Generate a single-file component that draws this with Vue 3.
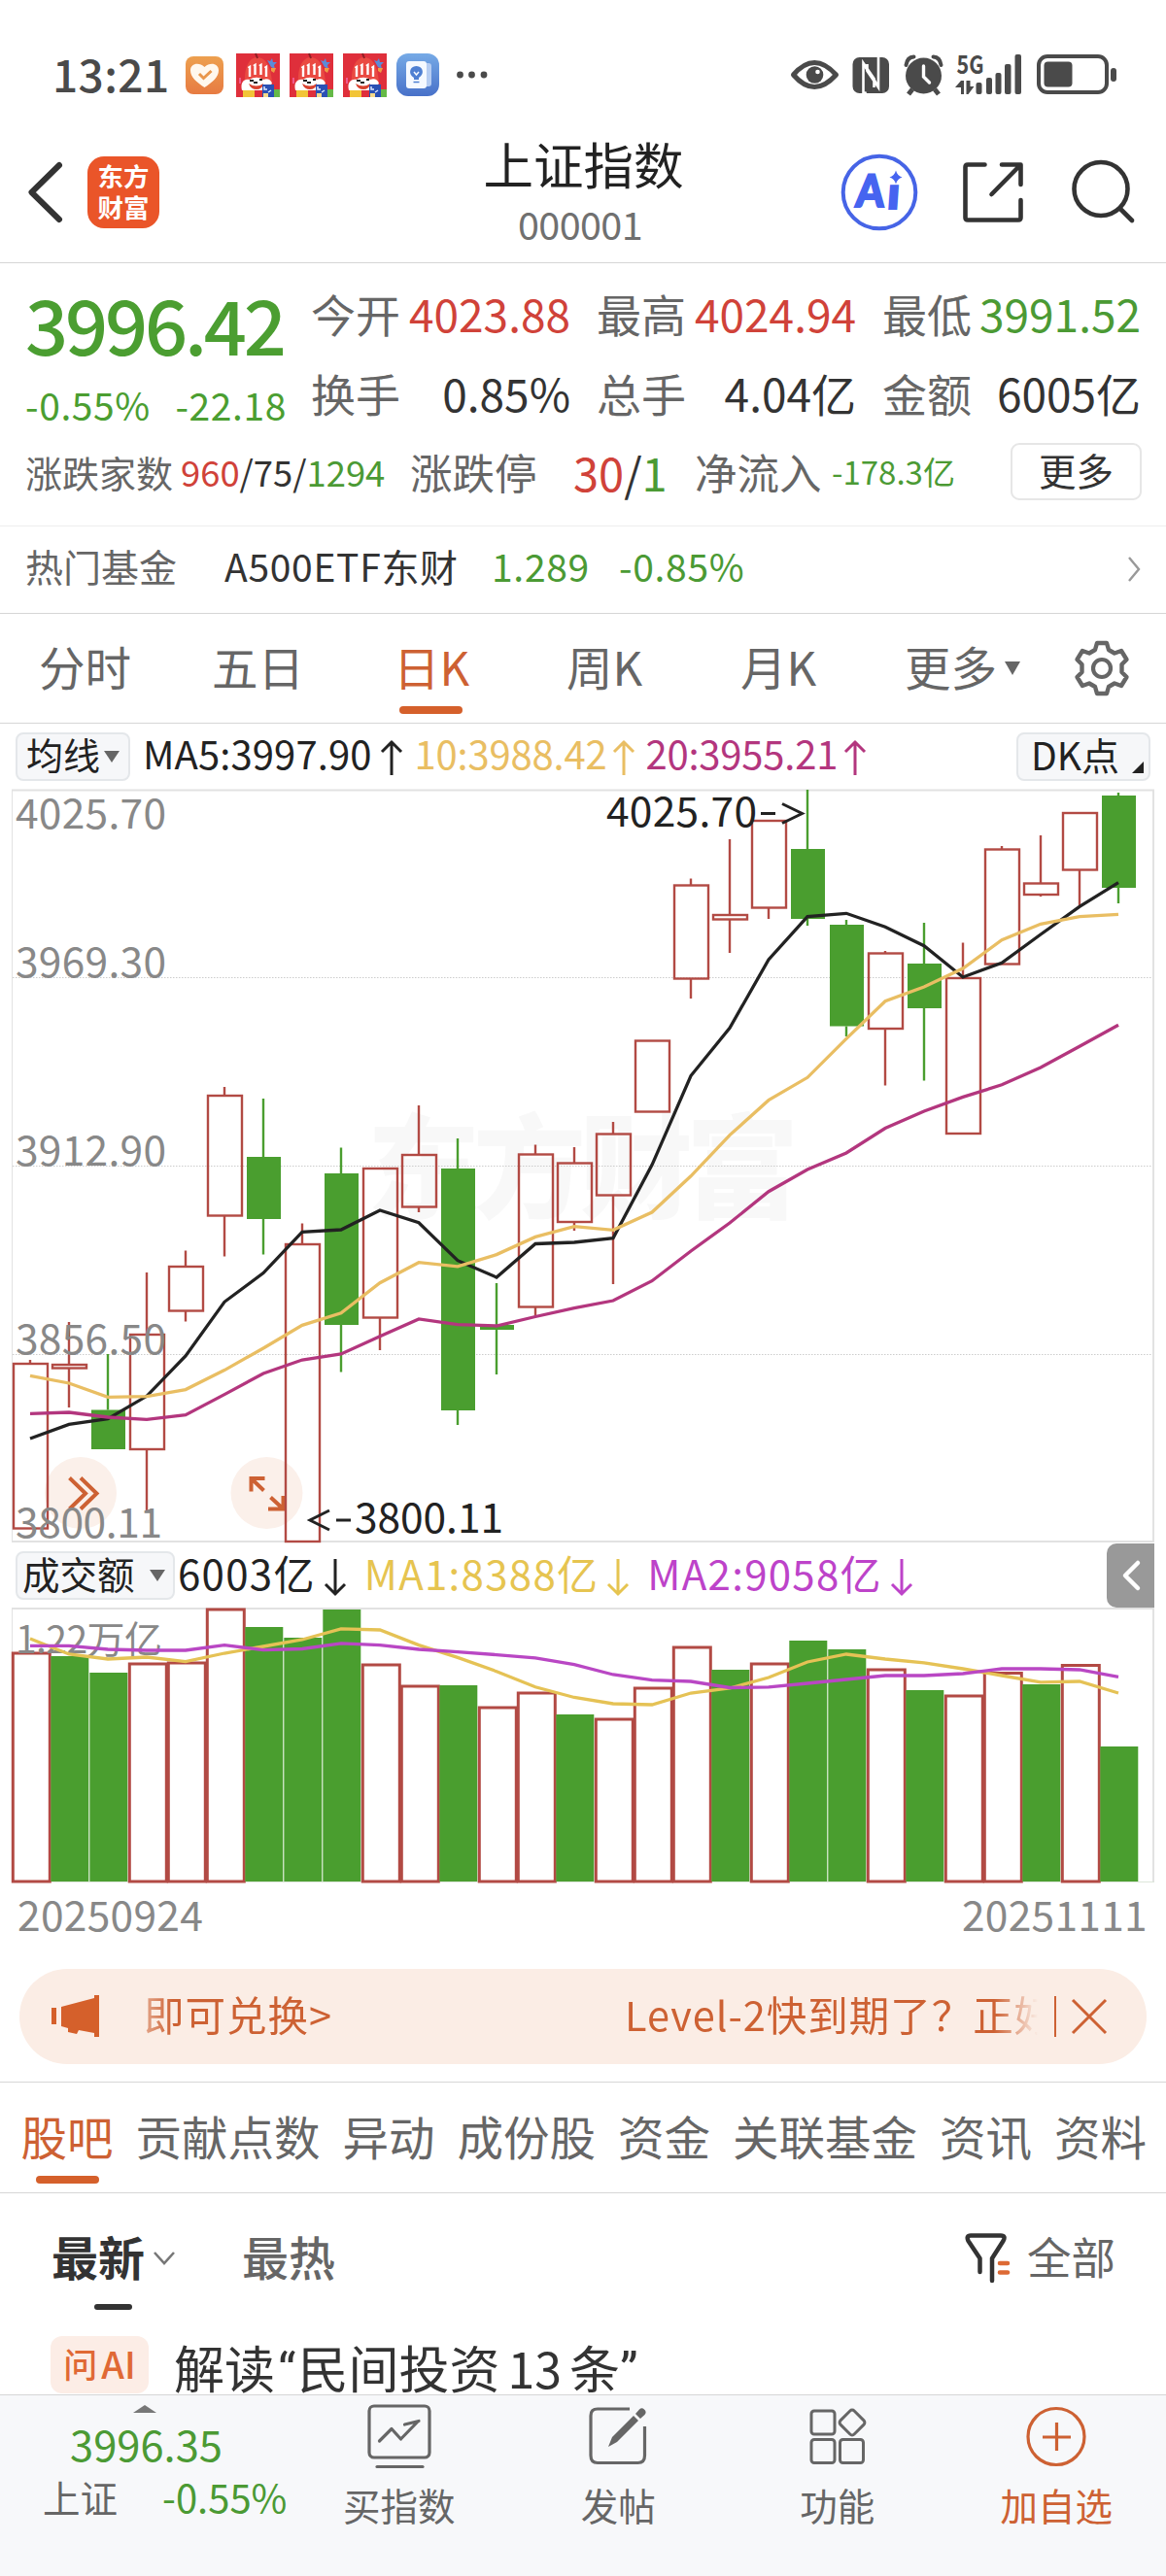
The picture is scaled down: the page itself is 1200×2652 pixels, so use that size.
<template>
  <div class="page">
    <div class="status-bar">
      <span class="clock">13:21</span>
      <svg class="status-apps" width="320" height="46" viewBox="0 0 320 46">
        <defs>
          <linearGradient id="orange" x1="0" y1="0" x2="0" y2="1">
            <stop offset="0" stop-color="#eda04f" />
            <stop offset="1" stop-color="#e77b42" />
          </linearGradient>
          <linearGradient id="blue" x1="0" y1="0" x2="0" y2="1">
            <stop offset="0" stop-color="#76aae6" />
            <stop offset="1" stop-color="#4871c9" />
          </linearGradient>
        </defs>
        <rect x="1" y="4" width="39" height="39" rx="8" fill="url(#orange)" />
        <path
          d="M20.500 36C12 30.500 6 25 6 18.500C6 11.500 14.500 9.500 20.500 15C26.500 9.500 35 11.500 35 18.500C35 25 29 30.500 20.500 36Z"
          fill="#fff8ee"
        />
        <path d="M15 22l4.500 4.500l8-7.500" fill="none" stroke="#e9974c" stroke-width="3" />
        <g v-for="n in 3" :key="n" :transform="`translate(${53 + (n - 1) * 55} 1)`">
          <rect width="45" height="45" fill="#df2f3b" />
          <path d="M32 7l3 1l2-3l1 4l4 0l-3 3l1 4l-4-2z" fill="#5b8bd8" />
          <path d="M36 15l5 0l-2 5l-3-2z" fill="#ef9b45" />
          <path d="M9 31C8 17 12 5 21 4C31 4 36 14 37 31Z" fill="#ea4a42" />
          <path d="M20 0l2 5" stroke="#8e1f24" stroke-width="2" />
          <path
            d="M14 24V14l-1.500 1M19.500 22V12l-1.500 1M25.500 22V12l-1.500 1M31 24V14l-1.500 1"
            stroke="#fff"
            stroke-width="2.400"
            fill="none"
          />
          <path d="M4 25v6" stroke="#ee5a8d" stroke-width="2" />
          <path d="M6 38c-2-8 2-12 8-11c4-3 10-3 14 0c4-2 8 0 9 4l-8 7z" fill="#fff" />
          <path d="M13 31q8 5 15 0q-1 6-7 6t-8-6z" fill="#d9422f" />
          <path d="M14 28h4M18 30h4M24 27h3" stroke="#222" stroke-width="2" />
          <path d="M19 41l10-2" stroke="#df2f3b" stroke-width="2" />
          <rect x="7" y="38" width="12" height="7" fill="#f2c437" />
          <rect x="27" y="32" width="12" height="13" fill="#2a50b4" />
          <path d="M29 34v3h3M36 38l-3 2" stroke="#dfe8ff" stroke-width="1.500" fill="none" />
          <rect x="28" y="41" width="5" height="4" fill="#f5d98a" />
          <path d="M39 37h6v8h-6z" fill="#65b947" />
        </g>
        <rect x="218" y="1" width="44" height="44" rx="12" fill="url(#blue)" />
        <rect x="240" y="11" width="14" height="24" rx="3" fill="#b6cdf2" />
        <rect x="228" y="9" width="21" height="28" rx="3" fill="#f5f9ff" />
        <path d="M236 26c-6-3-5-12 2.500-12s8.500 9 2.500 12v2h-5z" fill="#4f80d2" />
        <path d="M235.500 30.500h6" stroke="#4f80d2" stroke-width="1.500" fill="none" />
        <path d="M236 20l2.500 3l2.500-3" stroke="#f5f9ff" stroke-width="1.500" fill="none" />
        <circle v-for="x in [283.5, 295.5, 308]" :key="x" :cx="x" cy="23" r="3.400" fill="#4a4a4a" />
      </svg>

      <svg class="status-sys" width="340" height="46" viewBox="812 54 340 46" fill="#4a4a4a">
        <path
          d="M816.500 77Q838 52 860.500 77Q838 102 816.500 77Z"
          fill="none"
          stroke="#4a4a4a"
          stroke-width="5"
          stroke-linejoin="round"
        />
        <circle cx="838.500" cy="77" r="8.800" />
        <circle cx="841.500" cy="74" r="2.300" fill="#fff" />
        <rect x="877.500" y="59" width="37.500" height="37" rx="7" />
        <path
          d="M888.500 97V65l11 16V90M891 97l-1-2.500M904 58v32l-11.500-17V66"
          fill="none"
          stroke="#fff"
          stroke-width="2.600"
        />
        <path d="M888.500 66l15 22" stroke="#fff" stroke-width="2.600" />
        <circle cx="950.500" cy="78" r="18.500" />
        <path
          d="M932.500 67q1-8 8-8.500M968.500 67q-1-8-8-8.500"
          stroke="#4a4a4a"
          stroke-width="4"
          fill="none"
          stroke-linecap="round"
        />
        <path d="M939 92l-4 5M962 92l4 5" stroke="#4a4a4a" stroke-width="5" />
        <path d="M950.500 68v11l6 6" stroke="#fff" stroke-width="3.400" fill="none" stroke-linecap="round" />
        <text class="net" x="984.500" y="76" textLength="28" lengthAdjust="spacingAndGlyphs">5G</text>
        <path d="M983 90l6-7h3v14h-3v-7zM996 83h2.500v6h4l-6 8h-2V83z" />
        <rect x="1004.500" y="85" width="6" height="12" rx="2" />
        <rect x="1015" y="80" width="6" height="17" rx="2" />
        <rect x="1024.500" y="75" width="6" height="22" rx="2" />
        <rect x="1034" y="66" width="6.500" height="31" rx="2" />
        <rect x="1044.500" y="56" width="6.500" height="41" rx="2" />
        <rect
          x="1069"
          y="58"
          width="70"
          height="37"
          rx="9"
          fill="none"
          stroke="#4a4a4a"
          stroke-width="4"
        />
        <rect x="1074.500" y="63.500" width="29" height="26" rx="4" />
        <rect x="1143" y="70" width="6" height="14" rx="3" />
      </svg>
    </div>

    <header class="nav">
      <div class="nav-left">
        <svg width="40" height="64" viewBox="0 0 40 64">
          <path
            d="M35 4L6.500 32L35 60"
            fill="none"
            stroke="#333"
            stroke-width="6"
            stroke-linecap="round"
            stroke-linejoin="round"
          />
        </svg>
        <div class="logo"><span>东方</span><span>财富</span></div>
      </div>
      <div class="nav-title">
        <h1>上证指数</h1>
        <p>000001</p>
      </div>
      <svg class="nav-tools" width="310" height="84" viewBox="862 156 310 84" fill="none">
        <circle cx="905" cy="198" r="37.300" stroke="#4664e6" stroke-width="4" />
        <g transform="translate(0 213) skewX(-4)">
          <text class="ai" x="880" y="0" textLength="29" lengthAdjust="spacingAndGlyphs">A</text>
          <text class="ai" x="912.500" y="2" textLength="13" lengthAdjust="spacingAndGlyphs">ı</text>
        </g>
        <path d="M922 175.500q1.500 5.500 6.500 7q-5 1.500-6.500 7q-1.500-5.500-6.500-7q5-1.500 6.500-7z" fill="#4664f0" />
        <g stroke="#333" stroke-width="4.600" stroke-linecap="round" stroke-linejoin="round">
          <path d="M1013.500 169.500H996q-2.500 0-2.500 2.500V224q0 2.500 2.500 2.500H1048q2.500 0 2.500-2.500V206" />
          <path d="M1031 169.500H1050.500V190M1020.500 200L1050 170" />
          <circle cx="1133" cy="194.500" r="27.500" />
          <path d="M1153 215L1165 227" />
        </g>
      </svg>
    </header>

    <section class="quote">
      <div class="quote-top">
        <div class="price">
          <strong>3996.42</strong>
          <p><span>-0.55%</span><span>-22.18</span></p>
        </div>
        <div class="stats">
          <div v-for="s in stats" :key="s.label" class="stat">
            <label>{{ s.label }}</label>
            <span :class="s.color">{{ s.value }}</span>
          </div>
        </div>
      </div>
      <div class="quote-bottom">
        <label class="small">涨跌家数</label>
        <span class="counts"><i class="up">960</i>/75/<i class="down">1294</i></span>
        <label>涨跌停</label>
        <span class="limits"><i class="up">30</i>/<i class="down">1</i></span>
        <label>净流入</label>
        <span class="inflow down">-178.3亿</span>
        <button>更多</button>
      </div>
    </section>

    <section class="fund">
      <label>热门基金</label>
      <span class="fund-name">A500ETF东财</span>
      <span class="down">1.289</span>
      <span class="down">-0.85%</span>
      <svg width="16" height="28" viewBox="0 0 16 28">
        <path d="M3 2L13 14L3 26" fill="none" stroke="#999" stroke-width="2.400" />
      </svg>
    </section>

    <nav class="periods">
      <span v-for="p in periods" :key="p" :class="{ active: p === '日K' }">{{ p }}</span>
      <svg class="caret" width="16" height="14" viewBox="0 0 16 14">
        <path d="M0 0H16L8 14Z" fill="#666" />
      </svg>
      <svg class="gear" width="56" height="60" viewBox="-28 -30 56 60">
        <path
          d="M-5 -26H5L7 -19L13 -15.500L20 -18L25.500 -9L20.500 -4V4L25.500 9L20 18L13 15.500L7 19L5 26H-5L-7 19L-13 15.500L-20 18L-25.500 9L-20.500 4V-4L-25.500 -9L-20 -18L-13 -15.500L-7 -19Z"
          fill="none"
          stroke="#666"
          stroke-width="4.400"
          stroke-linejoin="round"
        />
        <circle r="9" fill="none" stroke="#666" stroke-width="4.200" />
      </svg>
    </nav>

    <div class="legend">
      <div class="picker ma-picker">
        均线
        <svg width="16" height="12" viewBox="0 0 16 12"><path d="M0 0H16L8 12Z" fill="#666" /></svg>
      </div>
      <span v-for="m in averages" :key="m.text" class="legend-item" :class="m.cls">
        {{ m.text }}
        <svg width="24" height="38" viewBox="0 0 24 38">
          <path d="M12 37V3M2 13L12 3L22 13" fill="none" stroke="currentColor" stroke-width="3" />
        </svg>
      </span>
      <div class="picker dk">
        DK点
        <svg width="12" height="12" viewBox="0 0 12 12"><path d="M12 0V12H0Z" fill="#222" /></svg>
      </div>
    </div>

    <svg class="chart" width="1200" height="777" viewBox="0 812 1200 777">
      <text class="watermark" x="378" y="1245" textLength="444">东方财富</text>
      <path
        v-for="y in [1006.5, 1200.5, 1394.5]"
        :key="y"
        :d="`M13 ${y}H1187`"
        stroke="#ccc"
        stroke-dasharray="1.500 1.500"
      />
      <path d="M12 813.500H1188M12 1587H1188" stroke="#e2e2e2" stroke-width="2" />
      <path d="M12.500 813V1587" stroke="#e2e2e2" />
      <path d="M1187 813V1587" stroke="#e2e2e2" stroke-width="2" />

      <circle cx="83" cy="1537" r="37" class="bubble" />
      <circle cx="274.500" cy="1537" r="37" class="bubble" />
      <g fill="none" stroke="#cd6133" stroke-width="4">
        <path d="M71.500 1521.500L88 1537.500L71.500 1553.500M83 1521.500L99.500 1537.500L83 1553.500" />
        <path d="M258.500 1535.500V1522H272.500M259 1522.500L271.500 1534.500" />
        <path d="M291.500 1540V1553.500H276M291 1553L278.500 1541.500" />
      </g>

      <g v-for="(c, i) in candles" :key="i" :class="c[0] ? 'rise' : 'fall'">
        <path :d="`M${cx(i)} ${c[1]}V${c[2]}M${cx(i)} ${c[3]}V${c[4]}`" />
        <rect :x="cx(i) - 17" :y="c[2]" width="35" :height="c[3] - c[2]" />
      </g>
      <polyline class="line ma5" :points="points(ma5)" />
      <polyline class="line ma20" :points="points(ma20)" />
      <polyline class="line ma10" :points="points(ma10)" />

      <g class="axis">
        <text x="16" y="852.500" textLength="155">4025.70</text>
        <text x="16" y="1006" textLength="155">3969.30</text>
        <text x="16" y="1200" textLength="155">3912.90</text>
        <text x="16" y="1393.500" textLength="155">3856.50</text>
        <text x="16" y="1582.500" textLength="151">3800.11</text>
      </g>
      <g class="mark">
        <text x="624" y="851" textLength="155">4025.70</text>
        <text x="365" y="1578" textLength="153">3800.11</text>
        <path d="M783 837.500H798M805 827.500L825.500 837.500L805 847.500" />
        <path d="M346 1565H361M339 1555L319 1565L339 1575" />
      </g>
    </svg>

    <div class="legend volume-legend">
      <div class="picker vol-picker">
        成交额
        <svg width="16" height="12" viewBox="0 0 16 12"><path d="M0 0H16L8 12Z" fill="#666" /></svg>
      </div>
      <span v-for="m in volumes" :key="m.text" class="legend-item" :class="m.cls">
        {{ m.text }}
        <svg width="24" height="40" viewBox="0 0 24 40">
          <path d="M12 1V37M2 27L12 37L22 27" fill="none" stroke="currentColor" stroke-width="3" />
        </svg>
      </span>
      <div class="fold">
        <svg width="22" height="34" viewBox="0 0 22 34">
          <path
            d="M18 4L5 17L18 30"
            fill="none"
            stroke="#fff"
            stroke-width="4.500"
            stroke-linecap="round"
            stroke-linejoin="round"
          />
        </svg>
      </div>
    </div>

    <svg class="chart" width="1200" height="284" viewBox="0 1655 1200 284">
      <path d="M12 1656H1188" stroke="#e2e2e2" stroke-width="2" />
      <path d="M12.500 1656V1938" stroke="#e2e2e2" />
      <path d="M1187 1656V1938" stroke="#e2e2e2" stroke-width="2" />
      <path d="M12 1937.500H1188" stroke="#dde6da" />
      <g v-for="(v, i) in bars" :key="i" :class="v[0] ? 'rise' : 'fall'">
        <rect
          v-if="v[0]"
          class="thick"
          :x="13.3 + i * 40"
          :y="v[1]"
          width="38"
          :height="1937 - v[1]"
        />
        <rect v-else :x="12.3 + i * 40" :y="v[1]" width="39" :height="1937 - v[1]" />
      </g>
      <text class="vol-max" x="16" y="1702" textLength="151">1.22万亿</text>
      <polyline class="line vma1" :points="points(vma1)" />
      <polyline class="line vma2" :points="points(vma2)" />
    </svg>

    <div class="dates"><span>20250924</span><span>20251111</span></div>

    <div class="notice">
      <svg width="50" height="44" viewBox="0 0 50 44" fill="#d5602b">
        <rect x="0" y="13" width="5" height="17" />
        <path d="M10 12L44 3V0H49V43H44V39L28 36L26 40L17 38V34L10 32Z" />
      </svg>
      <div class="marquee"><span>即可兑换&gt;</span><span>Level-2快到期了？正好</span></div>
      <i class="divider"></i>
      <svg class="close" width="36" height="36" viewBox="0 0 36 36">
        <path d="M1 1L35 35M35 1L1 35" stroke="#cd6133" stroke-width="3" />
      </svg>
    </div>

    <nav class="tabs">
      <span v-for="t in tabs" :key="t" :class="{ active: t === '股吧' }">{{ t }}</span>
    </nav>

    <div class="filters">
      <span class="newest">最新</span>
      <svg class="arrow" width="24" height="16" viewBox="0 0 24 16">
        <path d="M2 2L12 13L22 2" fill="none" stroke="#777" stroke-width="2.600" />
      </svg>
      <span class="hottest">最热</span>
      <svg class="funnel" width="48" height="52" viewBox="0 0 48 52" fill="none">
        <path
          d="M15.500 41V27L3.500 9Q1 3.500 6 3.500H37Q42.500 3.500 39.500 9L28 27V50"
          stroke="#333"
          stroke-width="4.500"
          stroke-linecap="round"
          stroke-linejoin="round"
        />
        <path d="M36 32H44M36 41.500H44" stroke="#dd6a35" stroke-width="4.600" stroke-linecap="round" />
      </svg>
      <span class="all">全部</span>
    </div>

    <div class="post">
      <span class="tag">问<b>AI</b></span>
      <p>解读<q class="ql">“</q>民间投资<em>13</em>条<q>”</q></p>
    </div>

    <footer class="dock">
      <div class="dock-index">
        <svg width="24" height="8" viewBox="0 0 24 8"><path d="M0 8L12 0L24 8Z" fill="#777" /></svg>
        <p class="down idx">3996.35</p>
        <p><label>上证</label><span class="down">-0.55%</span></p>
      </div>
      <div class="dock-item">
        <svg width="68" height="68" viewBox="0 0 68 68" fill="none" stroke="#666" stroke-width="3.200">
          <rect x="3" y="3" width="62" height="53" rx="5" />
          <path
            d="M13.500 39L26 26.500L35.500 37L53 19M39.500 22L54 18.500"
            stroke-linecap="round"
            stroke-linejoin="round"
          />
          <path d="M11 65.500H58" stroke-linecap="round" />
        </svg>
        <p>买指数</p>
      </div>
      <div class="dock-item">
        <svg width="68" height="68" viewBox="0 0 68 68" fill="none" stroke="#666" stroke-width="3.200">
          <path d="M46 6H13Q6 6 6 13V54Q6 61.500 13 61.500H54.500Q61.500 61.500 61.500 54V24" />
          <path d="M24 45L28 35L50 13L55 18L33 40Z" fill="#666" stroke="none" />
          <path d="M52 11L56 6.500Q58.500 4 61 6.500Q64 9 61.500 12L57 16Z" fill="#666" stroke="none" />
        </svg>
        <p>发帖</p>
      </div>
      <div class="dock-item">
        <svg width="68" height="68" viewBox="0 0 68 68" fill="none" stroke="#666" stroke-width="3">
          <rect x="7" y="8" width="24" height="24" rx="3" />
          <rect x="7" y="37.500" width="24" height="24" rx="3" />
          <rect x="36.500" y="37.500" width="24" height="24" rx="3" />
          <rect x="39" y="10" width="20" height="20" rx="3" transform="rotate(45 49 20)" />
        </svg>
        <p>功能</p>
      </div>
      <div class="dock-item add">
        <svg width="68" height="68" viewBox="0 0 68 68" fill="none" stroke="#cd6133" stroke-width="3.200">
          <circle cx="34" cy="34.500" r="29" />
          <path d="M34.500 20V49M20 35H49" />
        </svg>
        <p>加自选</p>
      </div>
    </footer>
  </div>
</template>

<script setup>
const stats = [
  { label: '今开', value: '4023.88', color: 'up' },
  { label: '最高', value: '4024.94', color: 'up' },
  { label: '最低', value: '3991.52', color: 'down' },
  { label: '换手', value: '0.85%' },
  { label: '总手', value: '4.04亿' },
  { label: '金额', value: '6005亿' },
]

const periods = ['分时', '五日', '日K', '周K', '月K', '更多']
const tabs = ['股吧', '贡献点数', '异动', '成份股', '资金', '关联基金', '资讯', '资料']

const averages = [
  { text: 'MA5:3997.90', cls: 'c-dark' },
  { text: '10:3988.42', cls: 'c-yellow' },
  { text: '20:3955.21', cls: 'c-magenta' },
]
const volumes = [
  { text: '6003亿', cls: 'c-dark' },
  { text: 'MA1:8388亿', cls: 'c-gold' },
  { text: 'MA2:9058亿', cls: 'c-purple' },
]

// [rise, high, body top, body bottom, low]
const candles = [
  [1, 1400, 1404, 1573.5, 1573.5],
  [1, 1361, 1405, 1408.5, 1449],
  [0, 1394, 1451.5, 1492, 1492],
  [1, 1310, 1374, 1492, 1555],
  [1, 1287.5, 1304, 1349.5, 1360.5],
  [1, 1119, 1128, 1251.5, 1293.5],
  [0, 1131, 1191, 1255, 1291.5],
  [1, 1259.5, 1281, 1587, 1587],
  [0, 1181.5, 1208, 1364, 1412.5],
  [1, 1202.5, 1203, 1356.5, 1390],
  [1, 1138, 1189, 1242.5, 1248],
  [0, 1172, 1203, 1452, 1467],
  [0, 1321, 1364, 1369, 1415],
  [1, 1178.5, 1188.5, 1345.5, 1354.5],
  [1, 1181, 1197.5, 1258, 1267],
  [1, 1155, 1167.5, 1230.5, 1322],
  [1, 1071.5, 1071.5, 1144.5, 1144.5],
  [1, 904.5, 911.5, 1007.5, 1028],
  [1, 864, 942, 946.5, 981],
  [1, 845, 845, 934.5, 946],
  [0, 813, 874, 946, 953],
  [0, 947, 952, 1056.5, 1067],
  [1, 979, 981.5, 1059, 1117.5],
  [0, 950, 992, 1038, 1112.5],
  [1, 970.5, 1007, 1167, 1167],
  [1, 871, 874.5, 992.5, 992.5],
  [1, 860, 909.5, 921, 923],
  [1, 837, 837, 895.5, 932.5],
  [0, 816, 819, 914, 930],
]

const ma5 = [
  1481, 1466.4, 1460.7, 1437.3, 1396, 1340.3, 1310.6, 1268.3, 1266, 1246, 1258.8, 1297.7, 1315,
  1280.5, 1279, 1274.7, 1199.3, 1107.5, 1058.3, 988, 943.7, 940.3, 954.3, 973.7, 1006, 991.3, 962,
  933.3, 908.7,
]
const ma10 = [
  1416.4, 1424, 1438.4, 1437.7, 1430.6, 1410.6, 1388, 1364.3, 1351.8, 1320.7, 1299.7, 1303.8,
  1291.6, 1273.4, 1262.6, 1266.3, 1248, 1210.8, 1168.6, 1132.7, 1109.3, 1069.3, 1030.7, 1016, 997,
  967.7, 951.3, 943.7, 941.3,
]
const ma20 = [
  1455.3, 1454, 1459, 1461.3, 1456.6, 1435.6, 1414, 1400, 1394, 1375.8, 1357.9, 1363.6, 1365,
  1355.5, 1346.7, 1339, 1318.7, 1288, 1259, 1226.7, 1204, 1187, 1161.5, 1144, 1129.4, 1116.8, 1099,
  1077.3, 1055.3,
]

// [rise, top]
const bars = [
  [1, 1702], [0, 1705], [0, 1722], [1, 1713], [1, 1712], [1, 1657], [0, 1675], [0, 1686],
  [0, 1657], [1, 1714], [1, 1736], [0, 1735], [1, 1758], [1, 1743], [0, 1765], [1, 1770],
  [1, 1738], [1, 1696], [0, 1719], [1, 1713], [0, 1689], [0, 1698], [1, 1719], [0, 1740],
  [1, 1746], [1, 1722.5], [0, 1734], [1, 1714.5], [0, 1798],
]

const vma1 = [
  1687, 1703, 1708, 1706, 1710.7, 1702, 1695, 1688, 1676.8, 1678, 1693.6, 1706.4, 1720.7, 1736.8,
  1747.5, 1754, 1755, 1743, 1738, 1727, 1711, 1703, 1708, 1711.8, 1718, 1725, 1731.8, 1731, 1743,
]
const vma2 = [
  1694.3, 1694.3, 1698, 1699, 1699, 1693.6, 1698.6, 1697.5, 1691.8, 1693.6, 1698, 1700.7, 1703.6,
  1706.8, 1713.6, 1724, 1729.6, 1731, 1737.5, 1736.8, 1733, 1729, 1725, 1725, 1723, 1718, 1718,
  1719, 1726.4,
]

const cx = (i) => 31 + i * 40
const points = (list) => list.map((y, i) => `${cx(i)},${y}`).join(' ')
</script>

<style>
body {
  background: #fff;
}
</style>

<style scoped>
.page {
  width: 1200px;
  height: 2652px;
  overflow: hidden;
  display: flex;
  flex-direction: column;
  background: #fff;
  color: #333;
  font-family: 'Noto Sans CJK SC', 'Liberation Sans', sans-serif;
}

.page > * {
  flex: none;
  box-sizing: border-box;
}

p,
h1 {
  margin: 0;
}

i,
em {
  font-style: normal;
}

svg {
  overflow: visible;
}

.up {
  color: #d04239;
}

.down {
  color: #4b9a34;
}

label {
  color: #666;
}

/* status bar */
.status-bar {
  height: 134px;
  padding: 20px 48px 0 54px;
  display: flex;
  align-items: center;
}

.clock {
  width: 136px;
  padding-bottom: 5px;
  font-size: 46px;
  font-weight: 500;
  line-height: 50px;
  letter-spacing: 0.4px;
  color: #4a4a4a;
}

.status-sys {
  margin-left: auto;
}

.net {
  font-size: 26px;
  font-weight: 700;
}

/* nav */
.nav {
  height: 137px;
  padding: 0 28px 0 26px;
  display: grid;
  grid-template-columns: 1fr auto 1fr;
  border-bottom: 1px solid #d6d6d6;
}

.nav-left {
  height: 128px;
  display: flex;
  align-items: center;
  gap: 24px;
}

.logo {
  width: 74px;
  height: 74px;
  padding-bottom: 3px;
  box-sizing: border-box;
  display: flex;
  flex-direction: column;
  align-items: center;
  justify-content: center;
  border-radius: 17px;
  background: #ea5529;
  color: #fff;
  font-size: 26.5px;
  font-weight: 700;
  line-height: 32px;
}

.nav-title {
  padding-top: 4px;
  text-align: center;
}

.nav-title h1 {
  margin-left: 3px;
  font-size: 51.5px;
  font-weight: 400;
  line-height: 60px;
  color: #222;
}

.nav-title p {
  margin: 13px 4px 0 0;
  font-size: 39.5px;
  line-height: 38px;
  letter-spacing: -0.6px;
  color: #707070;
}

.nav-tools {
  margin-top: 22px;
  justify-self: end;
}

.ai {
  font-family: Lato, 'Liberation Sans', sans-serif;
  font-size: 46px;
  font-weight: 900;
  fill: #4664f0;
  stroke: #4664f0;
  stroke-width: 2;
}

/* quote */
.quote {
  height: 271px;
  padding: 10px 26px 0 26px;
  border-bottom: 1px solid #ededed;
}

.quote-top {
  display: flex;
}

.price {
  width: 294px;
  padding-top: 11px;
  color: #4b9e31;
}

.price strong {
  display: block;
  font-size: 77.5px;
  font-weight: 500;
  line-height: 80px;
  letter-spacing: -3.2px;
}

.price p {
  margin-top: 24px;
  width: 269px;
  display: flex;
  justify-content: space-between;
  font-size: 39px;
  line-height: 40px;
  letter-spacing: 0.6px;
}

.stats {
  flex: 1;
  display: grid;
  grid-template-columns: 267px 267px 266px;
  grid-auto-rows: 82px;
  justify-content: space-between;
}

.stat {
  display: flex;
  align-items: center;
  justify-content: space-between;
  font-size: 46px;
  line-height: 60px;
}

.quote-bottom {
  height: 81px;
  display: grid;
  grid-template-columns: 160px 236px 168px 125px 141px 184px 135px;
  align-items: center;
  font-size: 43.5px;
  line-height: 60px;
}

.quote-bottom .small {
  font-size: 38px;
}

.counts {
  padding-bottom: 2px;
  font-size: 36.4px;
}

.limits {
  font-size: 47px;
}

.inflow {
  padding-bottom: 2px;
  font-size: 33px;
}

.quote-bottom button {
  height: 59px;
  padding: 0 0 6px;
  border: 2px solid #e6e6e6;
  border-radius: 9px;
  background: #fff;
  color: #333;
  font: inherit;
  font-size: 38.5px;
  line-height: 44px;
}

/* fund */
.fund {
  height: 90px;
  padding: 0 25px 9px 26px;
  display: flex;
  align-items: center;
  border-bottom: 1px solid #d6d6d6;
  font-size: 39px;
}

.fund label {
  width: 205px;
}

.fund-name {
  width: 275px;
  letter-spacing: 0.7px;
}

.fund .down {
  width: 131px;
  white-space: nowrap;
  letter-spacing: 0.7px;
}

.fund svg {
  margin: 8px 0 0 auto;
}

/* periods */
.periods {
  height: 113px;
  padding: 0 38px 5px 40px;
  display: flex;
  align-items: center;
  border-bottom: 1px solid #d6d6d6;
  font-size: 47.5px;
  color: #666;
}

.periods span {
  width: 178px;
  line-height: 60px;
}

.periods span:nth-child(2) {
  width: 187px;
}

.periods span:nth-child(3) {
  width: 178px;
}

.periods span:nth-child(4) {
  width: 179px;
}

.periods span:nth-child(5) {
  width: 169px;
}

.periods span:nth-child(6) {
  width: 103px;
}

.periods .active {
  position: relative;
  color: #cd6133;
}

.active::after {
  content: '';
  position: absolute;
  left: 6px;
  bottom: -19px;
  width: 65px;
  height: 8px;
  border-radius: 4px;
  background: #d5602b;
}

.gear {
  margin: 5px 0 0 auto;
}

.caret {
  margin-top: 5px;
}

/* legends */
.legend {
  height: 67px;
  padding: 0 16px;
  display: flex;
  align-items: center;
  font-size: 40px;
  line-height: 50px;
}

.picker {
  box-sizing: border-box;
  height: 50px;
  padding-bottom: 6px;
  display: flex;
  align-items: center;
  border: 2px solid #e4e7ea;
  border-radius: 8px;
  background: #f6f7f9;
  color: #222;
  font-size: 38px;
}

.picker svg {
  margin-top: 6px;
}

.ma-picker {
  width: 118px;
  margin-right: 13px;
  padding-left: 9px;
  gap: 4px;
}

.dk {
  width: 138px;
  margin-left: auto;
  padding-left: 13px;
  font-size: 39px;
}

.dk svg {
  margin: 29px 0 0 auto;
  padding-right: 5px;
}

.legend-item {
  display: flex;
  align-items: center;
  gap: 8px;
  margin-right: 12px;
  padding-bottom: 7px;
  white-space: nowrap;
  letter-spacing: 0.1px;
}

.c-yellow,
.c-magenta {
  gap: 6px;
  margin-right: 10px;
  letter-spacing: -0.2px;
}

.legend-item svg {
  margin-top: 10px;
}

.c-dark {
  color: #222;
}

.c-yellow {
  color: #e9be63;
}

.c-magenta {
  color: #b3367e;
}

.c-gold {
  color: #e6c450;
}

.c-purple {
  color: #bd43c9;
}

.volume-legend {
  height: 66px;
  padding-right: 12px;
  font-size: 42px;
}

.vol-picker {
  width: 164px;
  margin-right: 3px;
  padding-left: 5px;
  font-size: 38.5px;
}

.vol-picker svg {
  margin-left: auto;
  margin-right: 8px;
}

.volume-legend .legend-item {
  gap: 8px;
  margin-right: 18px;
  padding-bottom: 7px;
  letter-spacing: 1.3px;
}

.fold {
  width: 49px;
  height: 66px;
  margin-left: auto;
  display: flex;
  align-items: center;
  justify-content: center;
  border-radius: 10px 0 0 10px;
  background: #999;
}

/* charts */
.chart {
  display: block;
}

.rise path,
.rise rect {
  fill: none;
  stroke: #b24a44;
  stroke-width: 2.4;
}

.rise .thick {
  stroke-width: 3;
}

.fall path {
  stroke: #4a9e2f;
  stroke-width: 2.4;
}

.fall rect {
  fill: #4a9e2f;
}

.line {
  fill: none;
  stroke-width: 3.3;
}

.ma5 {
  stroke: #222;
}

.ma10 {
  stroke: #e9be63;
}

.ma20 {
  stroke: #b3367e;
}

.vma1 {
  stroke: #e5c255;
}

.vma2 {
  stroke: #b947c4;
}

.bubble {
  fill: #fbf0ea;
}

.axis {
  font-size: 42.5px;
  fill: #888;
}

.mark {
  font-size: 42.5px;
  fill: #222;
}

.mark path {
  fill: none;
  stroke: #222;
  stroke-width: 3;
}

.vol-max {
  font-size: 39px;
  fill: #888;
}

.watermark {
  font-size: 116px;
  font-weight: 900;
  fill: #f8f8f8;
}

.dates {
  height: 66px;
  padding: 0 19px 5px 18px;
  display: flex;
  align-items: center;
  justify-content: space-between;
  font-size: 42.5px;
  line-height: 50px;
  letter-spacing: 0.3px;
  color: #888;
}

/* notice */
.notice {
  height: 98px;
  margin: 22px 20px 0 20px;
  padding: 0 41px 0 33px;
  display: flex;
  align-items: center;
  border-radius: 49px;
  background: #fbede5;
  color: #cd6133;
}

.marquee {
  width: 920px;
  margin-left: 45px;
  padding-bottom: 6px;
  display: flex;
  overflow: hidden;
  white-space: nowrap;
  font-size: 41.5px;
  line-height: 60px;
  letter-spacing: 1px;
  -webkit-mask-image: linear-gradient(90deg, rgba(0, 0, 0, 0.5), #000 30px, #000 875px, transparent 920px);
  mask-image: linear-gradient(90deg, rgba(0, 0, 0, 0.5), #000 30px, #000 875px, transparent 920px);
}

.marquee span:first-child {
  flex: none;
  width: 495px;
}

.divider {
  width: 1.5px;
  height: 42px;
  margin-left: 17px;
  background: #cd6133;
}

.close {
  margin-left: auto;
}

/* tabs */
.tabs {
  height: 115px;
  margin-top: 18px;
  padding: 0 0 0 21.5px;
  display: flex;
  align-items: center;
  gap: 23px;
  border-top: 1px solid #d6d6d6;
  border-bottom: 1px solid #d6d6d6;
  font-size: 47.5px;
  color: #666;
  white-space: nowrap;
}

.tabs span {
  padding-bottom: 4px;
  line-height: 60px;
}

.tabs .active {
  position: relative;
  color: #cd6133;
}

.tabs .active::after {
  left: 15px;
  bottom: -15px;
}

/* filters */
.filters {
  height: 136px;
  padding: 0 52px 8px 53px;
  display: flex;
  align-items: center;
  font-size: 48px;
  font-weight: 500;
  color: #666;
}

.newest {
  position: relative;
  font-weight: 700;
  color: #333;
}

.newest::after {
  content: '';
  position: absolute;
  left: 44px;
  bottom: -21px;
  width: 39px;
  height: 6px;
  border-radius: 3px;
  background: #333;
}

.arrow {
  margin: 5px 0 0 8px;
}

.hottest {
  margin-left: 68px;
}

.funnel {
  margin: 4px 16px 0 auto;
}

.all {
  font-size: 45.5px;
  font-weight: 400;
}

/* post */
.post {
  height: 71px;
  padding: 11px 0 0 52px;
  display: flex;
  font-size: 52px;
}

.tag {
  box-sizing: border-box;
  width: 101px;
  height: 59px;
  padding-bottom: 4px;
  display: flex;
  align-items: center;
  justify-content: center;
  border-radius: 12px;
  background: #fcede6;
  color: #e06935;
  font-size: 35px;
  font-weight: 500;
}

.tag b {
  margin-left: 4px;
  font-weight: 500;
  font-size: 38px;
}

.post p {
  margin: -7px 0 0 26px;
  line-height: 78px;
  white-space: nowrap;
}

.post q {
  quotes: none;
  font-family: Roboto, sans-serif;
}

.post .ql {
  margin: 0 2px 0 3px;
}

.post em {
  margin: 0 8px 0 8px;
  font-size: 50px;
}

/* dock */
.dock {
  height: 187px;
  display: flex;
  border-top: 1px solid #d6d6d6;
  background: #f7f8fa;
}

.dock-index {
  width: 298px;
  padding-top: 10px;
}

.dock-index svg {
  display: block;
  margin-left: 137px;
}

.dock-index p {
  margin-left: 44px;
  font-size: 40px;
  line-height: 50px;
  white-space: nowrap;
}

.dock-index .idx {
  margin: 7px 0 4px 72px;
  font-size: 43.5px;
}

.dock-index label {
  display: inline-block;
  width: 123px;
  font-size: 38.5px;
}

.dock-item {
  width: 225.5px;
  padding-top: 8px;
  display: flex;
  flex-direction: column;
  align-items: center;
  font-size: 38.5px;
  line-height: 50px;
  color: #666;
}

.dock-item p {
  margin-top: 11px;
}

.add {
  color: #cd6133;
}
</style>
